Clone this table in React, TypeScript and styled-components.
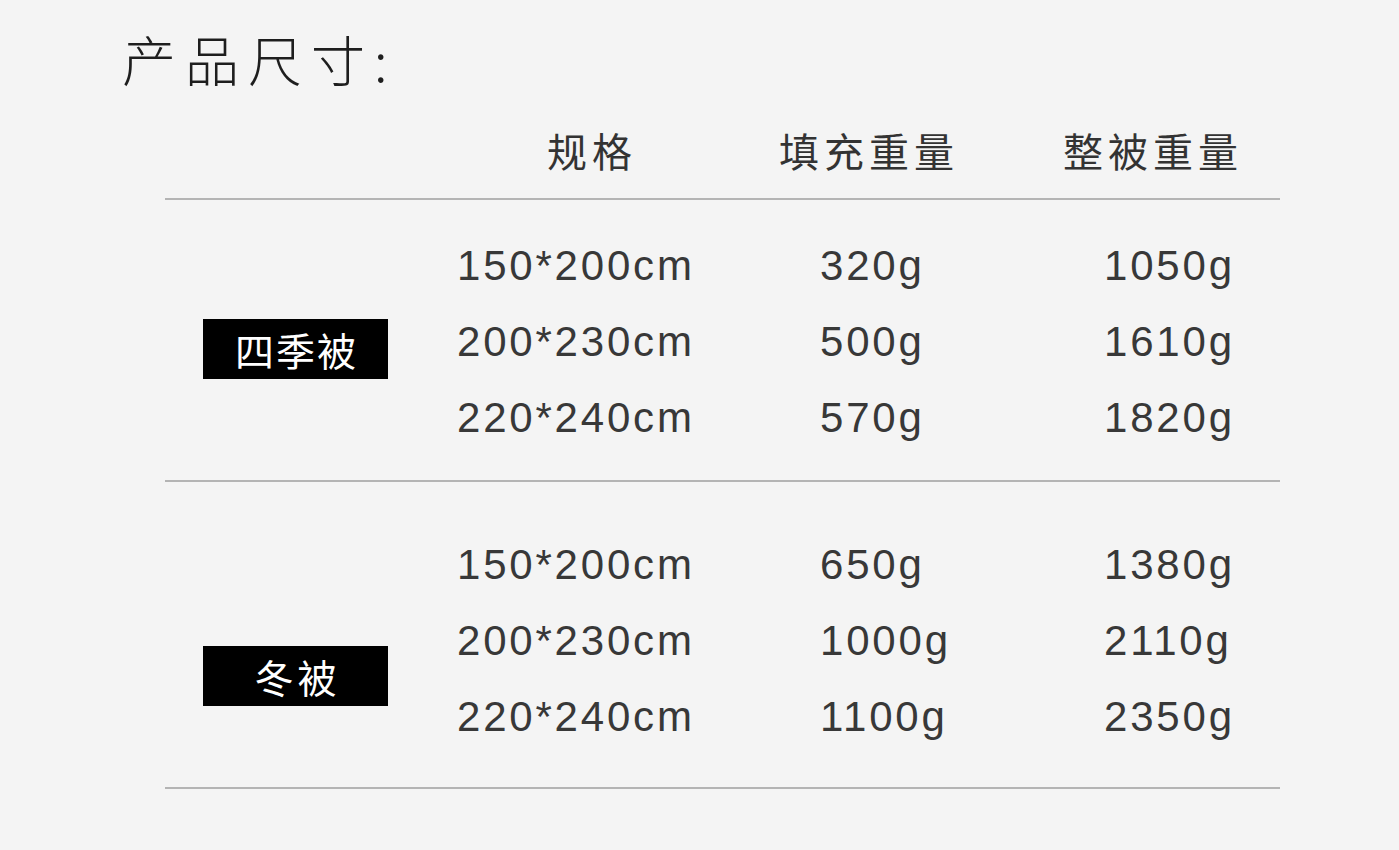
import * as React from "react";
import styled, { createGlobalStyle } from "styled-components";

const GlobalStyle = createGlobalStyle`
  html, body {
    margin: 0;
    padding: 0;
    background: #f4f4f4;
  }
`;

const Page = styled.div`
  width: 1399px;
  height: 850px;
  box-sizing: border-box;
  padding: 24px 0 0 122px;
  background: #f4f4f4;
  color: #2e2e2e;
  font-family: "Liberation Sans", "Noto Sans CJK SC", sans-serif;
`;

const Title = styled.h1`
  margin: 0;
  font-family: "Noto Sans CJK SC", sans-serif;
  font-size: 54px;
  font-weight: 300;
  line-height: 70px;
  letter-spacing: 9px;
  color: #1e1e1e;
`;

const Table = styled.div`
  width: 1115px;
  margin: 22px 0 0 43px;
`;

const HeaderRow = styled.div`
  display: grid;
  grid-template-columns: 382px 232px 284px auto;
  height: 84px;
  box-sizing: border-box;
  padding-top: 12px;
  align-items: start;
  border-bottom: 2px solid #b4b4b4;
`;

const HeaderCell = styled.div`
  font-family: "Noto Sans CJK SC", sans-serif;
  font-size: 40px;
  letter-spacing: 5px;
  color: #333;
  line-height: 1.1;
`;

const Group = styled.div<{ $top: number; $bottom: number }>`
  display: grid;
  grid-template-columns: 292px 363px 284px auto;
  grid-auto-rows: 76px;
  padding: ${(p) => p.$top}px 0 ${(p) => p.$bottom}px;
  border-bottom: 2px solid #b4b4b4;
`;

const Label = styled.div<{ $offset: number; $spacing: number }>`
  grid-row: 1 / span 3;
  grid-column: 1;
  align-self: start;
  margin: ${(p) => p.$offset}px 0 0 38px;
  width: 185px;
  height: 60px;
  background: #000;
  color: #fff;
  display: flex;
  align-items: center;
  justify-content: center;
  font-family: "Noto Sans CJK SC", sans-serif;
  font-size: 39px;
  letter-spacing: ${(p) => p.$spacing}px;
  text-indent: ${(p) => p.$spacing}px;
`;

const Cell = styled.div<{ $col: number }>`
  grid-column: ${(p) => p.$col};
  display: flex;
  align-items: center;
  font-size: 42px;
  letter-spacing: 2.8px;
  color: #383838;
`;

type Row = [string, string, string];

const groups: {
  label: string;
  spacing: number;
  top: number;
  bottom: number;
  offset: number;
  rows: Row[];
}[] = [
  {
    label: "四季被",
    spacing: 2,
    top: 28,
    bottom: 24,
    offset: 91,
    rows: [
      ["150*200cm", "320g", "1050g"],
      ["200*230cm", "500g", "1610g"],
      ["220*240cm", "570g", "1820g"],
    ],
  },
  {
    label: "冬被",
    spacing: 4,
    top: 45,
    bottom: 32,
    offset: 119,
    rows: [
      ["150*200cm", "650g", "1380g"],
      ["200*230cm", "1000g", "2110g"],
      ["220*240cm", "1100g", "2350g"],
    ],
  },
];

export default function App() {
  return (
    <>
      <GlobalStyle />
      <Page>
        <Title>产品尺寸:</Title>
        <Table>
          <HeaderRow>
            <div />
            <HeaderCell>规格</HeaderCell>
            <HeaderCell>填充重量</HeaderCell>
            <HeaderCell>整被重量</HeaderCell>
          </HeaderRow>
          {groups.map((g) => (
            <Group key={g.label} $top={g.top} $bottom={g.bottom}>
              <Label $offset={g.offset} $spacing={g.spacing}>
                {g.label}
              </Label>
              {g.rows.map((r) => (
                <React.Fragment key={r[0]}>
                  <Cell $col={2}>{r[0]}</Cell>
                  <Cell $col={3}>{r[1]}</Cell>
                  <Cell $col={4}>{r[2]}</Cell>
                </React.Fragment>
              ))}
            </Group>
          ))}
        </Table>
      </Page>
    </>
  );
}
